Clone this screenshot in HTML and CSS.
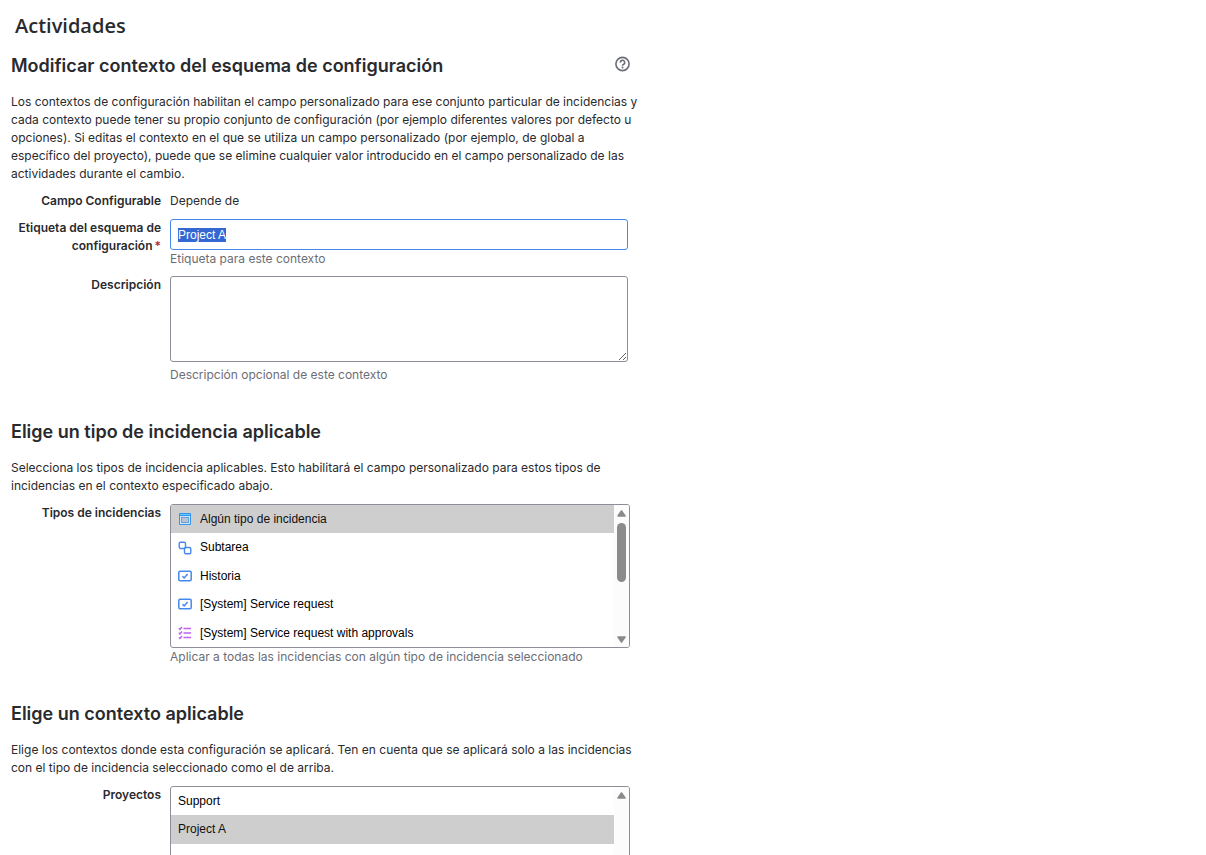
FILE: index.html
```
<!DOCTYPE html>
<html lang="es">
<head>
    <meta charset="UTF-8">
    <meta name="viewport" content="width=device-width, initial-scale=1.0">
    <title>Actividades</title>
    <link rel="stylesheet" href="styles.css">
</head>
<body>
    <h1 class="page-title">Actividades</h1>

    <form class="config-form">
        <section>
            <div class="section-header">
                <h2>Modificar contexto del esquema de configuración</h2>
                <a class="help-link" href="#" aria-label="Ayuda">
                    <svg width="16" height="16" viewBox="0 0 16 16" fill="none" stroke="#6b6e76" stroke-width="1.6">
                        <circle cx="8.5" cy="8" r="6.6"/>
                        <path d="M6.3 6.6a2.2 2.2 0 1 1 3.3 1.8c-.8.5-1.1.6-1.1 1.3"/>
                        <circle cx="8.5" cy="11.4" r="1" fill="#6b6e76" stroke="none"/>
                    </svg>
                </a>
            </div>
            <p>Los contextos de configuración habilitan el campo personalizado para ese conjunto particular de incidencias y cada contexto puede tener su propio conjunto de configuración (por ejemplo diferentes valores por defecto u opciones). Si editas el contexto en el que se utiliza un campo personalizado (por ejemplo, de global a específico del proyecto), puede que se elimine cualquier valor introducido en el campo personalizado de las actividades durante el cambio.</p>

            <div class="field">
                <span class="label">Campo Configurable</span>
                <span>Depende de</span>
            </div>
            <div class="field">
                <label class="label required" for="nombre">Etiqueta del esquema de configuración</label>
                <div class="control">
                    <input type="text" id="nombre" value="Project A" autofocus>
                    <div class="description">Etiqueta para este contexto</div>
                </div>
            </div>
            <div class="field">
                <label class="label" for="descripcion">Descripción</label>
                <div class="control">
                    <textarea id="descripcion"></textarea>
                    <div class="description description-spaced">Descripción opcional de este contexto</div>
                </div>
            </div>
        </section>

        <section>
            <h2>Elige un tipo de incidencia aplicable</h2>
            <p>Selecciona los tipos de incidencia aplicables. Esto habilitará el campo personalizado para estos tipos de incidencias en el contexto especificado abajo.</p>

            <div class="field">
                <label class="label" for="tipos">Tipos de incidencias</label>
                <div class="control">
                    <div class="list-box">
                        <select id="tipos" class="issue-types" multiple size="5">
                            <option class="icon-all" selected>Algún tipo de incidencia</option>
                            <option class="icon-subtask">Subtarea</option>
                            <option class="icon-task">Historia</option>
                            <option class="icon-task">[System] Service request</option>
                            <option class="icon-approval">[System] Service request with approvals</option>
                        </select>
                        <div class="scrollbar" aria-hidden="true">
                            <svg width="9" height="7"><path d="M4.5 1L8 6H1z"/></svg>
                            <div class="track"><div class="thumb"></div></div>
                            <svg width="9" height="7"><path d="M4.5 6L8 1H1z"/></svg>
                        </div>
                    </div>
                    <div class="description">Aplicar a todas las incidencias con algún tipo de incidencia seleccionado</div>
                </div>
            </div>
        </section>

        <section>
            <h2>Elige un contexto aplicable</h2>
            <p>Elige los contextos donde esta configuración se aplicará. Ten en cuenta que se aplicará solo a las incidencias con el tipo de incidencia seleccionado como el de arriba.</p>

            <div class="field">
                <label class="label" for="proyectos">Proyectos</label>
                <div class="control">
                    <div class="list-box">
                        <select id="proyectos" multiple size="5">
                            <option>Support</option>
                            <option selected>Project A</option>
                        </select>
                        <div class="scrollbar" aria-hidden="true">
                            <svg width="9" height="7"><path d="M4.5 1L8 6H1z"/></svg>
                            <div class="track"></div>
                            <svg width="9" height="7"><path d="M4.5 6L8 1H1z"/></svg>
                        </div>
                    </div>
                </div>
            </div>
        </section>
    </form>

    <script>
        const nombre = document.getElementById("nombre");
        nombre.focus({ preventScroll: true });
        nombre.select();
    </script>
</body>
</html>
```

FILE: styles.css
```
* {
    box-sizing: border-box;
}
body {
    margin: 0;
    padding: 12px 11px;
    background-color: #ffffff;
    color: #292a2e;
    font-family: Inter, sans-serif;
    font-size: 12px;
    line-height: 18px;
}
.page-title {
    margin: 0 0 14px;
    padding-left: 4px;
    font-family: "Open Sans", sans-serif;
    font-size: 20px;
    font-weight: 600;
    line-height: 28px;
}
.config-form {
    max-width: 619px;
}
section {
    margin-bottom: 37px;
}
.section-header {
    display: flex;
    justify-content: space-between;
}
h2 {
    margin: 0;
    font-size: 18px;
    font-weight: 600;
    line-height: 24px;
}
p {
    margin: 15px -10px 9px 0;
}
.help-link {
    height: 16px;
    margin-top: 2px;
}
.help-link svg {
    display: block;
}

.field {
    display: grid;
    grid-template-columns: 150px 1fr;
    column-gap: 9px;
    margin-top: 9px;
}
.label {
    font-weight: 600;
    text-align: right;
}
.required::after {
    content: "*";
    margin-left: 2px;
    color: #ae2e24;
}
.description {
    color: #6b6e76;
    line-height: 17px;
}
.description-spaced {
    margin-top: 4px;
}

input,
textarea,
select {
    display: block;
    width: 100%;
    border: 1px solid #8c8f97;
    border-radius: 3px;
    outline: none;
    background-color: #ffffff;
    color: #000000;
    font-family: "Liberation Sans", Arial, sans-serif;
    font-size: 12px;
}
input,
textarea {
    width: calc(100% - 2px);
    padding: 7px;
}
input {
    height: 31px;
}
input:focus {
    border-color: #4688ec;
}
input::selection {
    background-color: #3367d1;
    color: #ffffff;
}
textarea {
    height: 86px;
    resize: both;
}

.list-box {
    position: relative;
}
select {
    height: 144px;
    padding: 0;
}
option {
    box-sizing: content-box;
    padding: 7px;
}
.issue-types option {
    padding-left: 29px;
    background-repeat: no-repeat;
    background-position: 7px center;
}
.icon-all {
    background-image: url("data:image/svg+xml,%3Csvg xmlns='http://www.w3.org/2000/svg' width='14' height='14'%3E%3Crect x='1' y='1' width='12' height='12' rx='1' fill='%232f96f3'/%3E%3Cpath d='M2 2.5h10' stroke='%2368c5f5'/%3E%3Crect x='2' y='4' width='10' height='8' fill='%23d5e4f2'/%3E%3Crect x='3.5' y='5.5' width='7' height='5' fill='%23b4c4d8' stroke='%231769bd' stroke-width='1' stroke-dasharray='1 1'/%3E%3C/svg%3E");
}
.icon-subtask {
    background-image: url("data:image/svg+xml,%3Csvg xmlns='http://www.w3.org/2000/svg' width='14' height='14' fill='none' stroke='%234688ec' stroke-width='1.4'%3E%3Crect x='1.2' y='1.2' width='6.3' height='6.3' rx='1.4'/%3E%3Crect x='6.5' y='6.5' width='6.3' height='6.3' rx='1.4'/%3E%3C/svg%3E");
}
.icon-task {
    background-image: url("data:image/svg+xml,%3Csvg xmlns='http://www.w3.org/2000/svg' width='14' height='14' fill='none' stroke='%234688ec' stroke-width='1.5'%3E%3Crect x='.8' y='2.3' width='12.4' height='9.4' rx='1.2'/%3E%3Cpath d='M4.4 7.2l1.8 1.7 3.4-4'/%3E%3C/svg%3E");
}
.icon-approval {
    background-image: url("data:image/svg+xml,%3Csvg xmlns='http://www.w3.org/2000/svg' width='14' height='14' fill='none' stroke='%23bf63f3' stroke-width='1.5'%3E%3Cpath d='M5.5 2.5H13M5.5 7H13M5.5 11.5H13M.8 2.4l1.1 1L4 .9M.8 6.9l1.1 1L4 5.4M.8 11.5l1.1 1L4 10'/%3E%3C/svg%3E");
}

.scrollbar {
    position: absolute;
    top: 1px;
    right: 1px;
    bottom: 1px;
    display: flex;
    flex-direction: column;
    align-items: center;
    gap: 6px;
    width: 15px;
    padding: 5px 0 4px;
    border-radius: 0 2px 2px 0;
    background-color: #fcfcfc;
    pointer-events: none;
}
.scrollbar svg {
    fill: #8b8b8b;
    stroke: #8b8b8b;
    stroke-width: 1.6;
    stroke-linejoin: round;
}
.track {
    flex: 1;
    width: 9px;
}
.thumb {
    height: 59px;
    border-radius: 5px;
    background-color: #8b8b8b;
}
```
